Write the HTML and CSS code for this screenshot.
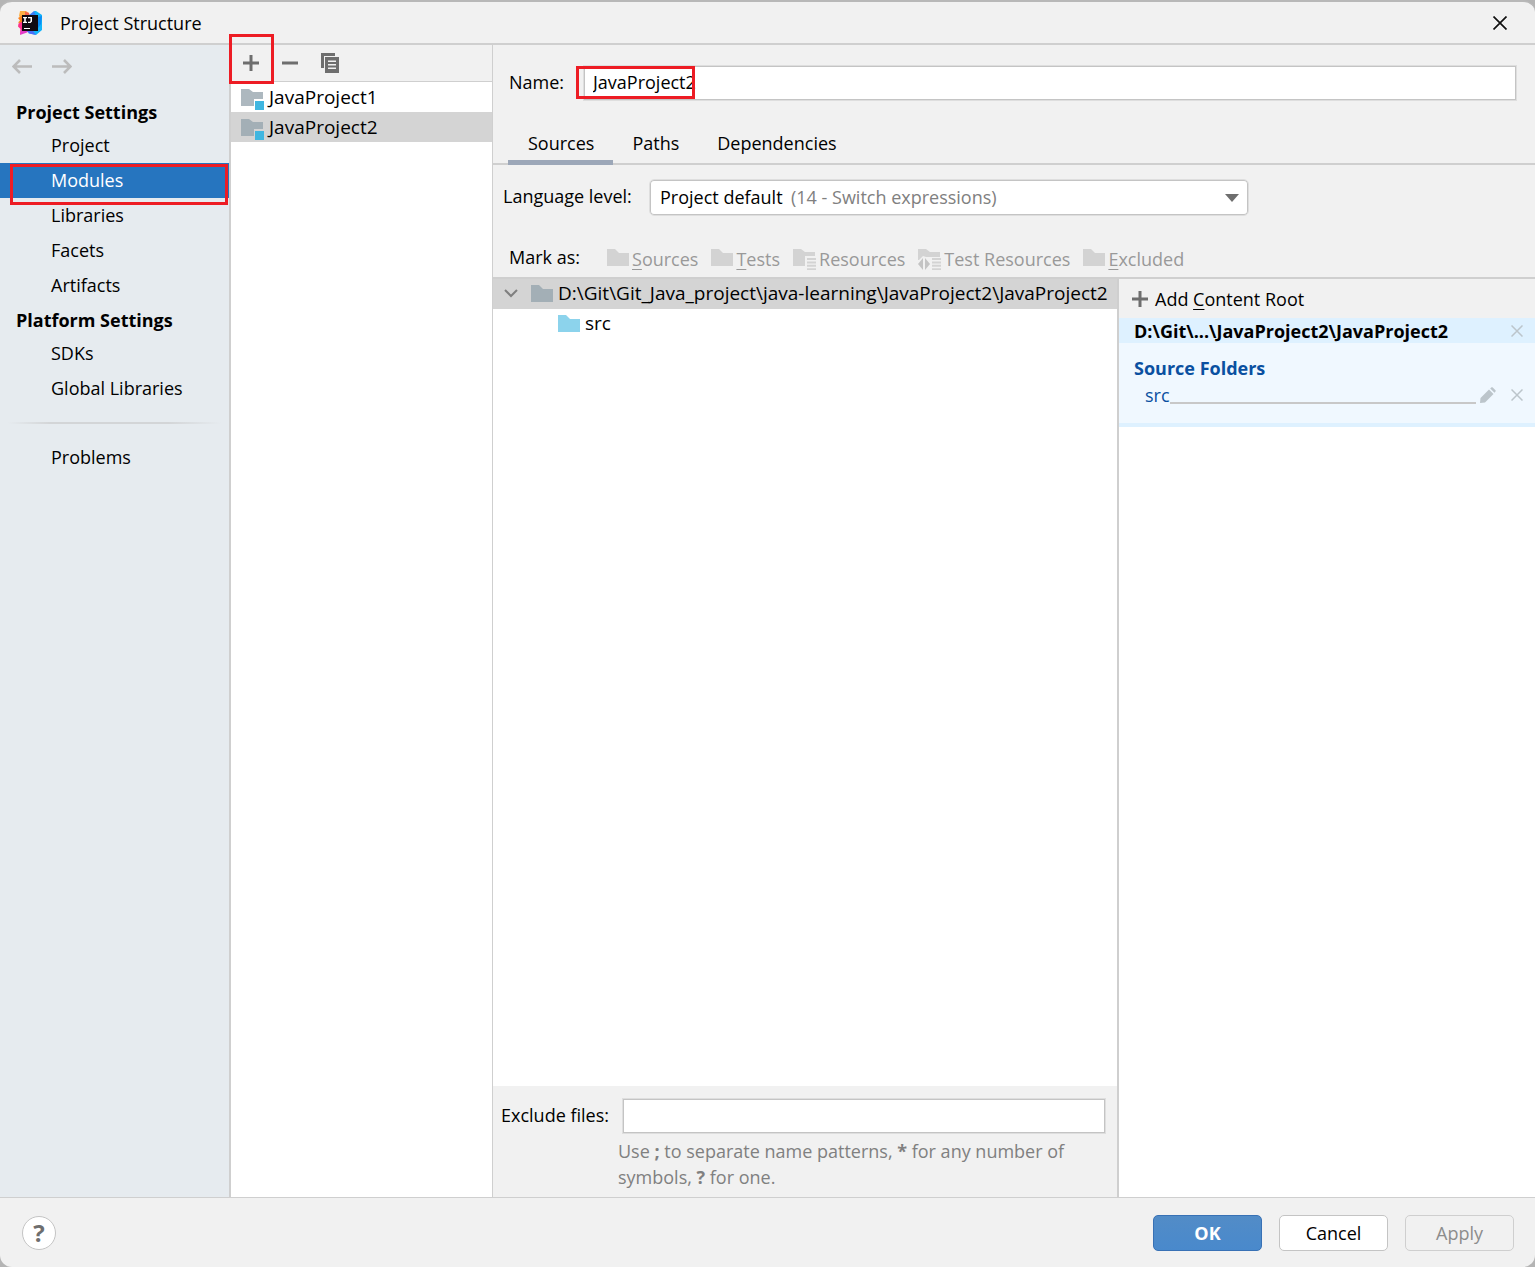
FILE: index.html
```html
<!DOCTYPE html>
<html lang="en">
<head>
<meta charset="utf-8">
<title>Project Structure</title>
<link rel="stylesheet" href="styles.css">
</head>
<body>
<svg class="sprite" aria-hidden="true">
  <symbol id="folder" viewBox="0 0 22 17"><path d="M0 0h8l4 4h10v13H0z"/></symbol>
  <symbol id="plus" viewBox="0 0 16 16"><path d="M6.500 0h3v6.500H16v3H9.500V16h-3V9.500H0v-3h6.500z"/></symbol>
  <symbol id="cross" viewBox="0 0 12 12"><path d="M0.500 0.500l11 11M11.500 0.500L0.500 11.500" fill="none" stroke="currentColor" stroke-width="1.500"/></symbol>
  <symbol id="lines" viewBox="0 0 9 12"><path d="M0 0h9v2H0zM0 3.400h9v2H0zM0 6.800h9v2H0zM0 10.200h9v1.800H0z"/></symbol>
</svg>
<div class="window">
  <header class="titlebar">
    <svg class="logo" viewBox="0 0 24 24" aria-hidden="true">
      <path fill="#fdb045" d="M2 0h6l3 2v6H3L1 5z"/>
      <path fill="#f8644a" d="M7 0.500l4 1.500 1 3H7z"/>
      <path fill="#fc801d" d="M0 7l5-3v9l-5-1.500L2 9.500z"/>
      <path fill="#ff318c" d="M0.500 12.500L6 10l3 10-7 3.500L2.500 18 0 15.500z"/>
      <path fill="#e23cc8" d="M3 19h9l-3 2.500-7 2.500z"/>
      <path fill="#3a7cf8" d="M10 5l6-5 7 4-2 16-9-7z"/>
      <path fill="#12b4fa" d="M16 0l2 0 6 4v15l-6 5-8-2 9-5-1-12z"/>
      <path fill="#0a8cf5" d="M20 6l4-1-1 8-3 4z"/>
      <path fill="#4a6cf7" d="M9 20h6l3 4-7-1.500z"/>
      <path fill="#100a10" d="M4 4h16v16H4z"/>
      <path fill="#fff" d="M5 6h4v1.300H7.800v3.400H9V12H5v-1.300h1.200V7.300H5zM10 6h4v4.500L12.500 12H10v-1.300h2l.5-.6V7.300H10zM6 17h6v1H6z"/>
    </svg>
    <h1 class="title">Project Structure</h1>
    <button class="icon-button close" type="button" aria-label="Close">
      <svg width="14" height="14" viewBox="0 0 14 14"><path d="M0.500 0.500l13 13M13.500 0.500l-13 13" fill="none" stroke="#111" stroke-width="1.700"/></svg>
    </button>
  </header>

  <div class="content">
    <nav class="sidebar" aria-label="Settings">
      <div class="history">
        <button class="icon-button" type="button" aria-label="Back" disabled><svg width="20" height="15" viewBox="0 0 20 15"><path d="M20 7.500H2M8 1L1.500 7.500 8 14" fill="none" stroke="#bcbcbc" stroke-width="2.600"/></svg></button>
        <button class="icon-button" type="button" aria-label="Forward" disabled><svg width="20" height="15" viewBox="0 0 20 15"><path d="M0 7.500h18M12 1l6.500 6.500L12 14" fill="none" stroke="#bcbcbc" stroke-width="2.600"/></svg></button>
      </div>
      <h2 class="nav-heading">Project Settings</h2>
      <a class="nav-item" href="#project">Project</a>
      <div class="marked">
        <a class="nav-item selected" href="#modules" aria-current="page">Modules</a>
        <span class="mark mark-modules"></span>
      </div>
      <a class="nav-item" href="#libraries">Libraries</a>
      <a class="nav-item" href="#facets">Facets</a>
      <a class="nav-item" href="#artifacts">Artifacts</a>
      <h2 class="nav-heading">Platform Settings</h2>
      <a class="nav-item" href="#sdks">SDKs</a>
      <a class="nav-item" href="#global">Global Libraries</a>
      <div class="nav-separator"></div>
      <a class="nav-item" href="#problems">Problems</a>
    </nav>

    <section class="modules" aria-label="Modules">
      <div class="toolbar marked">
        <button class="icon-button" type="button" aria-label="Add"><svg width="16" height="16"><use href="#plus"/></svg></button>
        <button class="icon-button" type="button" aria-label="Remove"><svg width="16" height="16" viewBox="0 0 16 16"><path d="M0 6.500h16v3H0z"/></svg></button>
        <button class="icon-button" type="button" aria-label="Copy"><svg width="18" height="20" viewBox="0 0 18 20"><path d="M0 0h14v3H3v12H0z"/><path fill-rule="evenodd" d="M4 4h14v16H4zM7 7.500V9h8V7.500zM7 11v1.500h8V11zM7 14.500V16h8v-1.500z"/></svg></button>
        <span class="mark mark-add"></span>
      </div>
      <ul class="list">
        <li class="row module"><svg class="module-icon" width="23" height="21" viewBox="0 0 23 21"><path fill="#adb8bf" d="M0 0h8l4 3h10v7h-9v7H0z"/><path fill="#40b6e0" d="M14 12h9v9h-9z"/></svg>JavaProject1</li>
        <li class="row module current"><svg class="module-icon" width="23" height="21" viewBox="0 0 23 21"><path fill="#a3afb6" d="M0 0h8l4 3h10v7h-9v7H0z"/><path fill="#40b6e0" d="M14 12h9v9h-9z"/></svg>JavaProject2</li>
      </ul>
    </section>

    <main class="editor">
      <div class="name-row">
        <label class="name-label" for="name">Name:</label>
        <div class="marked name-field">
          <input class="text-input" id="name" type="text" value="JavaProject2">
          <span class="mark mark-name"></span>
        </div>
      </div>
      <div class="tabs" role="tablist">
        <button class="tab active" type="button" role="tab" aria-selected="true">Sources</button>
        <button class="tab" type="button" role="tab" aria-selected="false">Paths</button>
        <button class="tab" type="button" role="tab" aria-selected="false">Dependencies</button>
      </div>
      <div class="level-row">
        <label class="level-label" for="level">Language level:</label>
        <div class="combo">
          <select class="combo-select" id="level"><option>Project default</option></select>
          <span class="combo-hint">(14 - Switch expressions)</span>
          <svg class="combo-arrow" width="14" height="8" viewBox="0 0 14 8"><path fill="#6e6e6e" d="M0 0h14L7 8z"/></svg>
        </div>
      </div>
      <div class="mark-row">
        <span class="mark-label">Mark as:</span>
        <button class="mark-button" type="button" disabled><svg class="flat" width="22" height="17"><use href="#folder"/></svg><span><u>S</u>ources</span></button>
        <button class="mark-button" type="button" disabled><svg class="flat" width="22" height="17"><use href="#folder"/></svg><span><u>T</u>ests</span></button>
        <button class="mark-button" type="button" disabled><svg class="tall" width="23" height="21" viewBox="0 0 23 21"><path d="M0 0h8l4 3h10v4H12v10H0z"/><use href="#lines" x="14" y="9" width="9" height="12"/></svg><span>Resources</span></button>
        <button class="mark-button" type="button" disabled><svg class="tall" width="23" height="21" viewBox="0 0 23 21"><path d="M0 0h8l4 3h10v5H8L5 7 1 11H0z"/><path fill="#c4c4c4" d="M5 9v12l-5-6zM7 9l5 6-5 6z"/><use href="#lines" x="14" y="9" width="9" height="12"/></svg><span>Test Resources</span></button>
        <button class="mark-button" type="button" disabled><svg class="flat" width="22" height="17"><use href="#folder"/></svg><span><u>E</u>xcluded</span></button>
      </div>

      <div class="split">
        <div class="tree-pane">
          <ul class="list tree">
            <li class="row root current"><svg class="chevron" width="14" height="9" viewBox="0 0 14 9"><path d="M1 1l6 6 6-6" fill="none" stroke="#7f7f7f" stroke-width="2"/></svg><svg width="22" height="17" fill="#a3afb6"><use href="#folder"/></svg>D:\Git\Git_Java_project\java-learning\JavaProject2\JavaProject2</li>
            <li class="row child"><svg width="22" height="17" fill="#8cd3ec"><use href="#folder"/></svg>src</li>
          </ul>
          <div class="exclude">
            <label class="exclude-label" for="exclude">Exclude files:</label>
            <input class="text-input" id="exclude" type="text">
            <p class="hint">Use <b>;</b> to separate name patterns, <b>*</b> for any number of symbols, <b>?</b> for one.</p>
          </div>
        </div>
        <aside class="roots">
          <button class="add-root" type="button"><svg width="16" height="16"><use href="#plus"/></svg><span>Add <u>C</u>ontent Root</span></button>
          <div class="root-head"><strong>D:\Git\...\JavaProject2\JavaProject2</strong>
            <button class="icon-button pale" type="button" aria-label="Remove content root"><svg width="12" height="12"><use href="#cross"/></svg></button></div>
          <div class="root-body">
            <h3 class="root-title">Source Folders</h3>
            <div class="root-folder"><a href="#src">src</a><span class="leader"></span>
              <button class="icon-button pale" type="button" aria-label="Edit properties"><svg width="16" height="16" viewBox="0 0 16 16"><path d="M0 16l.5-5L9 2.500 13.500 7 5 15.500zM10.200 1.500L11.500 0.300Q12 0 12.500.3l3 3q.5.500 0 1.200L14.500 5.800z"/></svg></button>
              <button class="icon-button pale" type="button" aria-label="Remove source folder"><svg width="12" height="12"><use href="#cross"/></svg></button></div>
          </div>
        </aside>
      </div>
    </main>
  </div>

  <footer class="footer">
    <button class="help" type="button" aria-label="Help">?</button>
    <div class="actions">
      <button class="button primary" type="button">OK</button>
      <button class="button" type="button">Cancel</button>
      <button class="button" type="button" disabled>Apply</button>
    </div>
  </footer>
</div>
</body>
</html>
```
FILE: styles.css
```css
* {
  box-sizing: border-box;
}

body {
  margin: 0;
  background: #b4b4b4;
  color: #000;
  font: 18px/24px "Open Sans", "Noto Sans", sans-serif;
}

h1, h2, h3, p, ul {
  margin: 0;
  padding: 0;
  font-size: inherit;
}

button, input, select {
  font: inherit;
  color: inherit;
}

a {
  color: inherit;
  text-decoration: none;
}

svg {
  display: block;
  flex: none;
}

u {
  text-decoration-thickness: 1px;
  text-underline-offset: 3px;
}

.sprite {
  position: absolute;
  width: 0;
  height: 0;
}

.window {
  display: flex;
  flex-direction: column;
  min-height: 100vh;
  border-top: 2px solid #b8b8b8;
  border-radius: 12px;
  background: #f1f1f1;
  overflow: hidden;
}

.icon-button {
  display: flex;
  padding: 0;
  border: 0;
  background: none;
  fill: #6e6e6e;
}

/* Title bar */
.titlebar {
  display: flex;
  align-items: center;
  height: 43px;
  padding: 0 28px 0 18px;
  border-bottom: 2px solid #cfcfcf;
}

.logo {
  width: 24px;
  height: 24px;
  margin-right: 18px;
}

.title {
  font-weight: 400;
}

.close {
  margin-left: auto;
}

.content {
  display: flex;
  flex: 1;
}

/* Red callouts */
.marked {
  position: relative;
}

.mark {
  position: absolute;
  z-index: 1;
  border: 3px solid #ed1c24;
  pointer-events: none;
}

.mark-modules {
  inset: 1px 1px -7px 10px;
}

.mark-add {
  top: -11px;
  left: -2px;
  width: 45px;
  height: 50px;
}

.mark-name {
  top: 1px;
  left: -7px;
  width: 119px;
  height: 33px;
}

/* Sidebar */
.sidebar {
  width: 231px;
  border-right: 2px solid #cfcfcf;
  background: #e6ebef;
}

.history {
  display: flex;
  align-items: center;
  gap: 20px;
  height: 42px;
  margin-bottom: 8px;
  padding-left: 12px;
}

.nav-heading {
  padding: 2px 0 0 16px;
  line-height: 31px;
}

.nav-item {
  display: block;
  padding-left: 51px;
  line-height: 35px;
}

.nav-item.selected {
  background: #2675bf;
  color: #fff;
}

.nav-separator {
  height: 2px;
  margin: 16px 8px;
  background: linear-gradient(90deg, transparent, #d3d5d7 20%, #d3d5d7 75%, transparent);
}

/* Module list */
.modules {
  width: 262px;
  border-right: 1px solid #cfcfcf;
  background: #fff;
}

.toolbar {
  display: flex;
  align-items: center;
  height: 37px;
  padding-left: 12px;
  gap: 23px;
  border-bottom: 1px solid #cfcfcf;
  background: #f1f1f1;
}

.list {
  list-style: none;
}

.row {
  display: flex;
  align-items: center;
  gap: 5px;
  height: 30px;
  font-size: 19px;
  white-space: nowrap;
}

.row.current {
  background: #d4d4d4;
}

.module {
  padding-left: 10px;
}

.module-icon {
  margin-top: 4px;
}

/* Editor */
.editor {
  display: flex;
  flex: 1;
  flex-direction: column;
  min-width: 0;
}

.name-row {
  display: flex;
  align-items: center;
  gap: 18px;
  padding: 20px 18px 20px 16px;
}

.name-label {
  width: 56px;
  padding-bottom: 2px;
}

.name-field {
  flex: 1;
}

.text-input {
  display: block;
  width: 100%;
  height: 36px;
  padding: 0 9px 2px;
  border: 1px solid #dedede;
  border-radius: 0;
  background: #fff;
  box-shadow: inset 0 0 0 1px #c4c4c4;
}

.tabs {
  display: flex;
  height: 44px;
  padding-left: 15px;
  background: linear-gradient(#cfcfcf, #cfcfcf) 0 42px / 100% 2px no-repeat;
}

.tab {
  padding: 5px 19px 0 20px;
  border: 0;
  border-bottom: 5px solid transparent;
  background: none;
}

.tab + .tab {
  padding-left: 19px;
}

.tab.active {
  border-color: #9ca7b8;
}

.level-row {
  display: flex;
  align-items: center;
  gap: 13px;
  padding: 14px 10px 0;
}

.level-label {
  width: 133px;
  padding-bottom: 3px;
  white-space: nowrap;
}

.combo {
  display: grid;
  align-items: center;
  width: 600px;
}

.combo-select {
  grid-area: 1 / 1;
  height: 37px;
  padding: 0 10px 2px;
  border: 1px solid #dedede;
  border-radius: 5px;
  background: #fff;
  box-shadow: inset 0 0 0 1px #c4c4c4;
  appearance: none;
}

.combo-hint {
  grid-area: 1 / 1;
  margin-left: 142px;
  padding-bottom: 2px;
  color: #808080;
  pointer-events: none;
}

.combo-arrow {
  grid-area: 1 / 1;
  justify-self: end;
  margin-right: 10px;
  pointer-events: none;
}

.mark-row {
  display: flex;
  align-items: center;
  gap: 13px;
  height: 63px;
  padding: 24px 16px 0;
  border-bottom: 2px solid #cfcfcf;
  white-space: nowrap;
}

.mark-label {
  margin-right: 14px;
  padding-bottom: 3px;
}

.mark-button {
  display: flex;
  align-items: center;
  gap: 3px;
  padding: 0;
  border: 0;
  background: none;
  color: #999;
  fill: #d3d3d3;
}

.mark-button .tall {
  margin-top: 1px;
}

.mark-button .flat {
  margin-bottom: 3px;
}

.split {
  display: flex;
  flex: 1;
}

.tree-pane {
  display: flex;
  flex: 3;
  flex-direction: column;
  min-width: 0;
  background: #fff;
}

.tree {
  flex: 1;
}

.tree .row {
  padding-bottom: 2px;
}

.root {
  padding-left: 11px;
}

.chevron {
  margin-right: 8px;
}

.child {
  padding-left: 65px;
}

.exclude {
  display: grid;
  grid-template-columns: auto 1fr;
  column-gap: 13px;
  align-items: center;
  padding: 12px 11px 7px 8px;
  background: #f1f1f1;
}

.exclude-label {
  padding-bottom: 2px;
}

.hint {
  grid-column: 2;
  margin: 4px 0 0 -4px;
  line-height: 26px;
  color: #808080;
}

.roots {
  flex: 2;
  border-left: 2px solid #cfcfcf;
  background: #fff;
}

.add-root {
  display: flex;
  align-items: center;
  gap: 7px;
  width: 100%;
  height: 39px;
  padding: 0 13px;
  border: 0;
  background: #f1f1f1;
  fill: #6e6e6e;
}

.root-head {
  display: flex;
  align-items: center;
  justify-content: space-between;
  height: 25px;
  padding: 0 12px 0 15px;
  background: #def1ff;
}

.pale {
  color: #bcc5cb;
  fill: #bcc5cb;
}

.root-body {
  height: 84px;
  padding: 13px 12px 0 15px;
  border-bottom: 4px solid #def1ff;
  background: #f0f8ff;
  color: #0a50a1;
}

.root-folder {
  display: flex;
  align-items: center;
  gap: 15px;
  margin-top: 3px;
  padding-left: 11px;
}

.leader {
  flex: 1;
  height: 18px;
  margin: 0 -11px 0 -15px;
  border-bottom: 2px solid #c8c8c8;
}

/* Footer */
.footer {
  display: flex;
  align-items: center;
  justify-content: space-between;
  height: 70px;
  padding: 0 21px 0 22px;
  border-top: 1px solid #cfcfcf;
}

.help {
  width: 34px;
  height: 34px;
  padding: 0;
  border: 1px solid #c4c4c4;
  border-radius: 50%;
  background: #fff;
  color: #6e6e6e;
  font-size: 24px;
  font-weight: 700;
}

.actions {
  display: flex;
  gap: 17px;
}

.button {
  width: 109px;
  height: 36px;
  padding: 1px 0 0;
  border: 1px solid #c4c4c4;
  border-radius: 5px;
  background: #fff;
}

.button.primary {
  border-color: #3871b5;
  background: linear-gradient(#528cc7, #4989cc);
  color: #fff;
  font-weight: 700;
}

.button:disabled {
  border-color: #cfcfcf;
  background: #f1f1f1;
  color: #8c8c8c;
}
```
